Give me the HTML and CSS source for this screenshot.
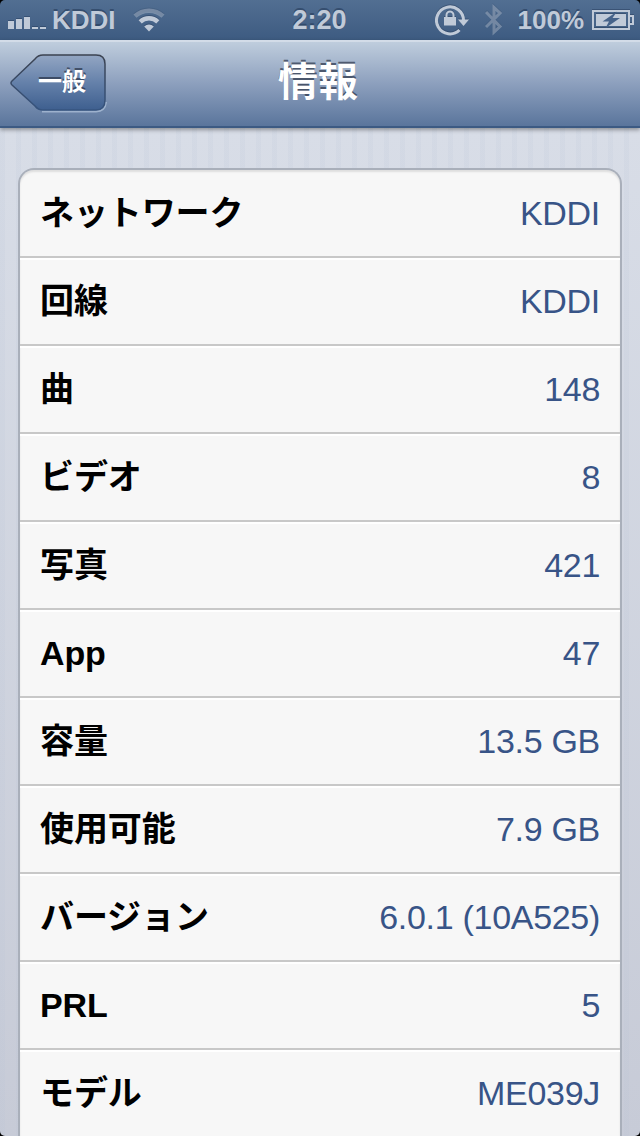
FILE: index.html
```html
<!DOCTYPE html>
<html lang="ja">
<head>
<meta charset="UTF-8">
<meta name="viewport" content="width=device-width, initial-scale=1.0">
<title>情報</title>
<link rel="stylesheet" href="styles.css">
</head>
<body>

<div class="screen">

  <div class="status-bar">
    <div class="status-left">
      <svg class="status-icon signal-icon" width="40" height="14" viewBox="0 0 40 14">
        <path d="M0 6h6v8H0zM8 4h6v10H8zM16 2h6v12h-6zM24 12h6v2h-6zM32 12h6v2h-6z"/>
      </svg>
      <span class="carrier">KDDI</span>
      <svg class="status-icon wifi-icon" width="32" height="24" viewBox="0 0 32 24">
        <path class="arc faded" d="M2 8.200A20.500 20.500 0 0 1 30 8.200"/>
        <path class="arc" d="M7.200 13.800A12.800 12.800 0 0 1 24.800 13.800"/>
        <path d="M11.200 18.500A7 7 0 0 1 20.800 18.500L16 23.500z"/>
      </svg>
    </div>
    <span class="clock">2:20</span>
    <div class="status-right">
      <svg class="status-icon lock-icon" width="34" height="32" viewBox="0 0 34 32">
        <path class="line" d="M24.500 26A13.500 13.500 0 1 1 28.500 16.500"/>
        <path d="M23 15.500h11L28.500 22z"/>
        <path d="M9 13h12v8.500H9z"/>
        <path class="line thin" d="M11.500 13.500V11a3.500 3.500 0 0 1 7 0V13.500"/>
      </svg>
      <svg class="status-icon bluetooth-icon" width="18" height="32" viewBox="0 0 18 32">
        <path class="line faded" d="M1 8L15 22.500L9 28V3.500L15 9L1 23"/>
      </svg>
      <span class="percent">100%</span>
      <svg class="status-icon battery-icon" width="42" height="20" viewBox="0 0 42 20">
        <path class="line thin" d="M1 1h36v18H1zM37 6h4v8h-4"/>
        <path d="M4 4h30v12H4z"/>
        <path class="bolt" d="M25 1.500L10.500 11.500H17L13.500 18L28 8H20.500z"/>
      </svg>
    </div>
  </div>

  <div class="nav-bar">
    <a class="back-button" href="#">
      <svg class="back-shape" width="100" height="64" viewBox="1 0 100 64">
        <defs>
          <linearGradient id="backFill" x1="0" y1="0" x2="0" y2="1">
            <stop offset="0" stop-color="#93a6c3"/>
            <stop offset=".5" stop-color="#6581aa"/>
            <stop offset="1" stop-color="#3e5f8f"/>
          </linearGradient>
          <linearGradient id="backEdge" x1="0" y1="0" x2="0" y2="1">
            <stop offset="0" stop-color="#3b4250"/>
            <stop offset="1" stop-color="#36547f"/>
          </linearGradient>
        </defs>
        <path class="back-glow" d="M33 59.500H87Q96 59.500 97 50"/>
        <path fill="url(#backFill)" stroke="url(#backEdge)" stroke-width="1.5" d="M34 3H87Q96 3 96 12V48Q96 58 87 58H34Q29 58 26 54L3 33Q1 31 3 29L26 7Q29 3 34 3z"/>
      </svg>
      <span class="back-label">一般</span>
    </a>
    <h1 class="nav-title">情報</h1>
  </div>

  <div class="content">
    <ul class="info-list">
      <li><span class="label">ネットワーク</span><span class="value">KDDI</span></li>
      <li><span class="label">回線</span><span class="value">KDDI</span></li>
      <li><span class="label">曲</span><span class="value">148</span></li>
      <li><span class="label">ビデオ</span><span class="value">8</span></li>
      <li><span class="label">写真</span><span class="value">421</span></li>
      <li><span class="label">App</span><span class="value">47</span></li>
      <li><span class="label">容量</span><span class="value">13.5 GB</span></li>
      <li><span class="label">使用可能</span><span class="value">7.9 GB</span></li>
      <li><span class="label">バージョン</span><span class="value">6.0.1 (10A525)</span></li>
      <li><span class="label">PRL</span><span class="value">5</span></li>
      <li><span class="label">モデル</span><span class="value">ME039J</span></li>
    </ul>
  </div>

</div>

</body>
</html>
```

FILE: styles.css
```css
/* --- Basic Setup --- */
* {
  box-sizing: border-box;
}

body {
  margin: 0;
  background-color: #000;
  font-family: "Liberation Sans", "Noto Sans CJK JP", sans-serif;
  overflow: hidden;
}

.screen {
  display: flex;
  flex-direction: column;
  width: 640px;
  height: 1136px;
  border-radius: 5px;
  overflow: hidden;
}

/* --- Status Bar --- */
.status-bar {
  display: grid;
  grid-template-columns: 1fr auto 1fr;
  align-items: center;
  flex: none;
  height: 40px;
  padding: 0 6px 0 8px;
  background: linear-gradient(#526f92, #3d5b81);
  color: #c0cad8;
  font-size: 26px;
  font-weight: bold;
  line-height: 40px;
  text-shadow: 0 -2px 0 rgba(30, 50, 80, 0.5);
}

.status-left,
.status-right {
  display: flex;
  align-items: center;
  height: 40px;
}

.status-right {
  justify-content: flex-end;
}

.status-icon {
  display: block;
  flex: none;
  fill: #c0cad8;
  filter: drop-shadow(0 -1px 0 rgba(30, 50, 80, 0.4));
}

.status-icon .line {
  fill: none;
  stroke: #c0cad8;
  stroke-width: 3;
}

.status-icon .thin {
  stroke-width: 2;
}

.status-icon .arc {
  fill: none;
  stroke: #c0cad8;
  stroke-width: 4.5;
}

.status-icon .faded {
  opacity: 0.4;
}

.status-icon .bolt {
  fill: #46638a;
}

.signal-icon {
  margin-top: 4px;
}

.carrier {
  margin-left: 4px;
}

.wifi-icon {
  margin-left: 17px;
}

.clock {
  margin-right: 3px;
  font-size: 27px;
}

.bluetooth-icon {
  margin-left: 16px;
}

.percent {
  margin-left: 15px;
}

.battery-icon {
  margin-left: 8px;
}

/* --- Navigation Bar --- */
.nav-bar {
  display: grid;
  grid-template-columns: 1fr auto 1fr;
  flex: none;
  height: 88px;
  padding-left: 10px;
  border-top: 2px solid #d3dce8;
  border-bottom: 2px solid #3c5a83;
  background: linear-gradient(#bfcddd, #8c9fbd 50%, #5a759c);
  box-shadow: 0 2px 4px rgba(0, 0, 0, 0.35);
  z-index: 1;
}

.back-button {
  display: grid;
  width: 100px;
  height: 64px;
  margin-top: 10px;
  color: #fff;
  text-decoration: none;
}

.back-shape,
.back-label {
  grid-area: 1 / 1;
}

.back-glow {
  fill: none;
  stroke: rgba(190, 208, 230, 0.6);
  stroke-width: 2;
}

.back-label {
  padding-left: 28px;
  font-size: 24px;
  font-weight: bold;
  line-height: 60px;
  text-shadow: 0 -2px 0 rgba(40, 50, 70, 0.7);
  z-index: 1;
}

.nav-title {
  margin: 0 0 0 -14px;
  color: #fff;
  font-size: 40px;
  line-height: 80px;
  text-shadow: 0 -2px 0 rgba(50, 60, 80, 0.75);
}

/* --- Page Content --- */
.content {
  flex: 1;
  min-height: 0;
  padding: 40px 18px 0;
  background:
    repeating-linear-gradient(90deg, rgba(180, 192, 212, 0.13) 0 5px, transparent 5px 16px),
    linear-gradient(#d8dde7, #c7cbd7);
  overflow: hidden;
}

/* The list runs on below the fold, so only the top is rounded */
.info-list {
  margin: 0;
  padding: 0;
  list-style: none;
  border: 2px solid #a9afba;
  border-bottom: none;
  border-radius: 16px 16px 0 0;
  background-color: #f7f7f7;
  box-shadow: inset 0 2px 2px rgba(0, 0, 0, 0.1);
}

.info-list li {
  display: flex;
  justify-content: space-between;
  height: 88px;
  padding: 0 20px;
  border-bottom: 2px solid #c8c8c8;
  font-size: 34px;
  line-height: 86px;
}

.info-list li + li {
  box-shadow: inset 0 2px 0 #fff;
}

.info-list li:last-child {
  border-bottom: none;
}

.label {
  color: #000;
  font-weight: bold;
  letter-spacing: -0.1px;
}

.value {
  color: #385487;
  letter-spacing: -0.3px;
}
```
